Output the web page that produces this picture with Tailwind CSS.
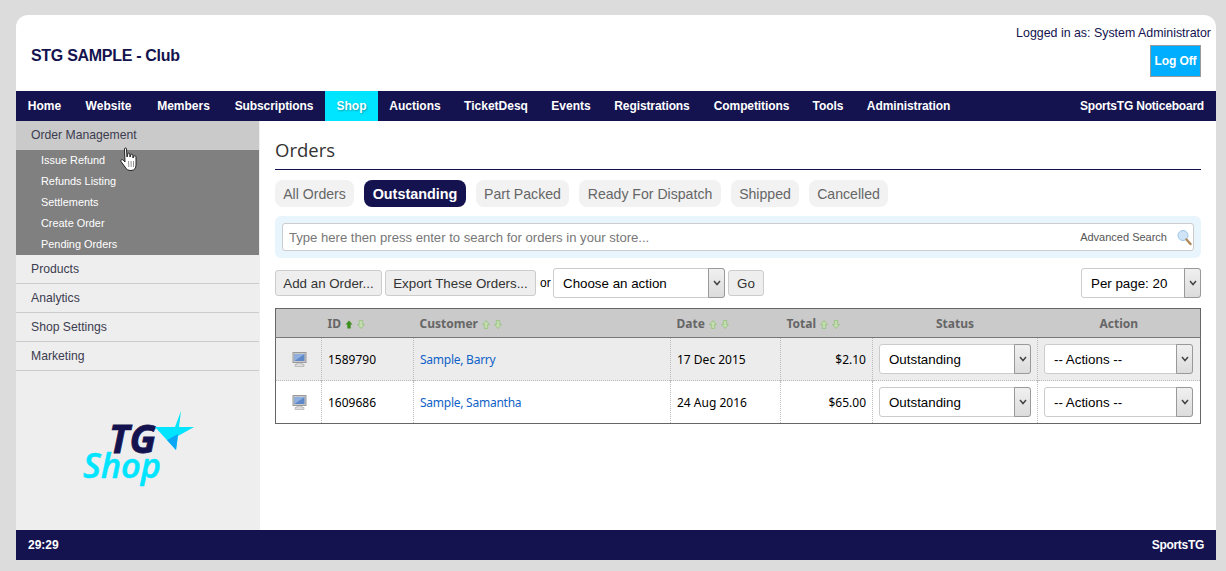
<!DOCTYPE html>
<html lang="en">
<head>
  <meta charset="UTF-8">
  <title>Orders</title>
  <script src="https://cdn.jsdelivr.net/npm/@tailwindcss/browser@4"></script>
</head>
<body class="bg-[#dcdcdc] font-['Liberation_Sans',sans-serif] h-[571px] overflow-hidden">
  <div class="relative w-[1200px] ml-4 pt-[15px]">
    <!-- header -->
    <header class="bg-white rounded-t-xl h-[76px] flex justify-between pl-[15px] pr-[5px]">
      <h1 class="text-[16px] tracking-[-0.3px] font-bold text-[#14134f] mt-[31px] leading-[20px]">STG SAMPLE - Club</h1>
      <div class="flex flex-col items-end">
        <p class="text-[12.4px] text-[#14134f] leading-[16px] mt-[10px]">Logged in as: System Administrator</p>
        <button class="mt-1 mr-[10px] w-[51px] h-[32px] bg-[#00aeff] border border-[#999] text-white text-[12px] tracking-[-0.1px] font-bold">Log Off</button>
      </div>
    </header>

    <!-- nav -->
    <nav class="bg-[#14134f] h-[30px] flex justify-between text-white text-[12px] font-bold leading-[30px]">
      <ul class="flex text-center">
        <li class="w-[57px]">Home</li>
        <li class="w-[71px]">Website</li>
        <li class="w-[79px]">Members</li>
        <li class="w-[102px] tracking-[-0.1px]">Subscriptions</li>
        <li class="w-[53px] bg-[#00e5ff] [text-shadow:1px_1px_2px_rgba(0,0,0,0.3)]">Shop</li>
        <li class="w-[74px]">Auctions</li>
        <li class="w-[88px]">TicketDesq</li>
        <li class="w-[62px]">Events</li>
        <li class="w-[100px] tracking-[-0.1px]">Registrations</li>
        <li class="w-[99px] tracking-[-0.1px]">Competitions</li>
        <li class="w-[54px]">Tools</li>
        <li class="w-[107px] tracking-[-0.1px]">Administration</li>
      </ul>
      <span class="pr-3 tracking-[-0.2px]">SportsTG Noticeboard</span>
    </nav>

    <div class="flex h-[409px] bg-white">
      <!-- sidebar -->
      <aside class="w-[244px] shrink-0 bg-[#eeeeee] relative">
        <div class="w-[243px] text-[12.2px] text-[#3c3c50]">
          <div class="h-[29px] bg-[#cacaca] pl-[15px] leading-[28px]">Order Management</div>
          <ul class="h-[105px] bg-[#808080] text-white text-[10.9px] pl-[25px]">
            <li class="h-[21px] leading-[21px]">Issue Refund</li>
            <li class="h-[21px] leading-[21px]">Refunds Listing</li>
            <li class="h-[21px] leading-[21px]">Settlements</li>
            <li class="h-[21px] leading-[21px]">Create Order</li>
            <li class="h-[21px] leading-[21px]">Pending Orders</li>
          </ul>
          <div class="h-[29px] pl-[15px] leading-[28px] border-b border-[#cccccc]">Products</div>
          <div class="h-[29px] pl-[15px] leading-[28px] border-b border-[#cccccc]">Analytics</div>
          <div class="h-[29px] pl-[15px] leading-[28px] border-b border-[#cccccc]">Shop Settings</div>
          <div class="h-[29px] pl-[15px] leading-[28px] border-b border-[#cccccc]">Marketing</div>
        </div>
        <!-- TG Shop logo -->
        <svg class="ml-[60px] mt-[36px]" width="125" height="80" viewBox="0 0 125 80">
          <text x="33" y="46" font-family="Open Sans" font-style="italic" font-weight="700" font-size="39" fill="#14134f" stroke="#14134f" stroke-width="0.8" textLength="47" lengthAdjust="spacingAndGlyphs">TG</text>
          <text x="7" y="71" font-family="Open Sans" font-style="italic" font-weight="600" font-size="34" fill="#00e5ff" stroke="#00e5ff" stroke-width="0.5" textLength="78" lengthAdjust="spacingAndGlyphs">Shop</text>
          <path d="M79 20 L99 20 L105 4 L103 20 L118 20 L102 29 L100 43 Z" fill="#00e5ff"/>
          <path d="M91 33 L102 27 L100 43 Z" fill="#0aa5f5"/>
        </svg>
        <!-- mouse pointer -->
        <svg class="absolute left-[104px] top-[26px]" width="18" height="25" viewBox="0 0 18 25">
          <path d="M4.5 2 C4.5 0.6 6.5 0.6 6.5 2 L7 10 L8 6.5 C8.5 5.5 9.8 6 9.8 7 L10 10 L11 7.5 C11.5 6.8 12.8 7.2 12.8 8.2 L13 11 L14 9 C14.6 8.4 16 8.8 16 10 L16 18 C16 21 14.5 23.5 11 23.5 C8 23.5 6.5 22.5 5 20 L1 14.5 C0.3 13.2 2 12 3.2 13 L5 15 Z" fill="#fff" stroke="#222" stroke-width="1"/>
          <path d="M8.5 14 L8.8 20 M11 14 L11.2 20 M13.5 14 L13.5 20" stroke="#777" stroke-width="0.8"/>
        </svg>
      </aside>

      <!-- main -->
      <main class="flex-1 pl-[15px] pr-[16px]">
        <h2 class="font-['Open_Sans',sans-serif] text-[18.5px] text-[#333] leading-[20px] pt-[19px] h-[49px] border-b border-[#14134f]">Orders</h2>

        <div class="flex h-[27px] gap-[10px] mt-[10px] text-[14.1px] text-[#666] leading-[29px] text-center">
          <a class="w-[79px] rounded-lg bg-[#f2f2f2]">All Orders</a>
          <a class="w-[102px] rounded-lg bg-[#14134f] text-white font-bold text-[14.4px]">Outstanding</a>
          <a class="w-[93px] rounded-lg bg-[#f2f2f2]">Part Packed</a>
          <a class="w-[142px] rounded-lg bg-[#f2f2f2]">Ready For Dispatch</a>
          <a class="w-[68px] rounded-lg bg-[#f2f2f2]">Shipped</a>
          <a class="w-[79px] rounded-lg bg-[#f2f2f2]">Cancelled</a>
        </div>

        <div class="mt-[9px] h-[42px] bg-[#e9f5fd] rounded-md px-[7px] py-[7px]">
          <div class="h-[28px] bg-white border border-[#ccc] rounded-[3px] flex items-center pl-[6px] pr-[1px]">
            <span class="pt-px text-[13.1px] text-[#777] flex-1">Type here then press enter to search for orders in your store...</span>
            <span class="pt-px text-[11px] text-[#555] mr-[10px]">Advanced Search</span>
            <svg width="15" height="17" viewBox="0 0 15 17">
              <circle cx="6" cy="6.5" r="5" fill="#cfe4f7" stroke="#9fc3e6"/>
              <path d="M9.5 10.5 L13.5 15" stroke="#b08a5a" stroke-width="2.4" stroke-linecap="round"/>
            </svg>
          </div>
        </div>

        <div class="flex items-center mt-[10px] h-[30px] text-[13.33px] text-[#333]">
          <button class="pt-px w-[107px] h-[26px] bg-[#eeeeee] border border-[#ccc] rounded-[3px]">Add an Order...</button>
          <button class="pt-px ml-[3px] w-[151px] h-[26px] bg-[#eeeeee] border border-[#ccc] rounded-[3px]">Export These Orders...</button>
          <span class="ml-[4px] w-[13px] text-[12px] text-black">or</span>
          <div class="w-[172px] h-[30px] bg-white border border-[#ccc] rounded-[3px] flex items-center text-black">
            <span class="pt-px flex-1 pl-[9px]">Choose an action</span>
            <span class="w-[17px] h-[30px] -mr-px bg-gradient-to-b from-[#f0f0f0] to-[#dcdcdc] border border-[#999] rounded-r-[3px] flex items-center justify-center">
              <svg width="8" height="6" viewBox="0 0 8 6"><path d="M1 1 L4 4.5 L7 1" fill="none" stroke="#444" stroke-width="1.5"/></svg>
            </span>
          </div>
          <button class="pt-px ml-[3px] w-[36px] h-[26px] bg-[#eeeeee] border border-[#ccc] rounded-[3px]">Go</button>
          <div class="ml-auto w-[120px] h-[30px] bg-white border border-[#ccc] rounded-[3px] flex items-center text-black">
            <span class="pt-px flex-1 pl-[9px]">Per page: 20</span>
            <span class="w-[17px] h-[30px] -mr-px bg-gradient-to-b from-[#f0f0f0] to-[#dcdcdc] border border-[#999] rounded-r-[3px] flex items-center justify-center">
              <svg width="8" height="6" viewBox="0 0 8 6"><path d="M1 1 L4 4.5 L7 1" fill="none" stroke="#444" stroke-width="1.5"/></svg>
            </span>
          </div>
        </div>

        <!-- orders table -->
        <table class="mt-[10px] w-[925px] table-fixed border-collapse border border-[#666] font-['Noto_Sans',sans-serif] text-[12px] text-black">
          <colgroup>
            <col class="w-[46px]"><col class="w-[92px]"><col class="w-[257px]"><col class="w-[110px]"><col class="w-[92px]"><col class="w-[165px]"><col class="w-[163px]">
          </colgroup>
          <thead>
            <tr class="h-[29px] bg-[#cacaca] border-b border-[#777] text-[#666] font-bold text-left">
              <th></th>
              <th class="pl-[6px] pt-[2px]"><span class="inline-flex items-center gap-1">ID
                <svg width="20" height="9" viewBox="0 0 20 9"><path d="M4 0.5 L7.5 4.5 H5.7 V8.5 H2.3 V4.5 H0.5 Z" fill="#3f8f1f"/><path d="M16 8.5 L12.5 4.5 H14.3 V0.5 H17.7 V4.5 H19.5 Z" fill="#c2dcae" stroke="#8fbf75" stroke-width="0.7"/></svg></span></th>
              <th class="pl-[6px] pt-[2px]"><span class="inline-flex items-center gap-1">Customer
                <svg width="20" height="9" viewBox="0 0 20 9"><path d="M4 0.5 L7.5 4.5 H5.7 V8.5 H2.3 V4.5 H0.5 Z" fill="#c2dcae" stroke="#8fbf75" stroke-width="0.7"/><path d="M16 8.5 L12.5 4.5 H14.3 V0.5 H17.7 V4.5 H19.5 Z" fill="#c2dcae" stroke="#8fbf75" stroke-width="0.7"/></svg></span></th>
              <th class="pl-[6px] pt-[2px]"><span class="inline-flex items-center gap-1">Date
                <svg width="20" height="9" viewBox="0 0 20 9"><path d="M4 0.5 L7.5 4.5 H5.7 V8.5 H2.3 V4.5 H0.5 Z" fill="#c2dcae" stroke="#8fbf75" stroke-width="0.7"/><path d="M16 8.5 L12.5 4.5 H14.3 V0.5 H17.7 V4.5 H19.5 Z" fill="#c2dcae" stroke="#8fbf75" stroke-width="0.7"/></svg></span></th>
              <th class="pl-[6px] pt-[2px]"><span class="inline-flex items-center gap-1">Total
                <svg width="20" height="9" viewBox="0 0 20 9"><path d="M4 0.5 L7.5 4.5 H5.7 V8.5 H2.3 V4.5 H0.5 Z" fill="#c2dcae" stroke="#8fbf75" stroke-width="0.7"/><path d="M16 8.5 L12.5 4.5 H14.3 V0.5 H17.7 V4.5 H19.5 Z" fill="#c2dcae" stroke="#8fbf75" stroke-width="0.7"/></svg></span></th>
              <th class="text-center pt-[2px]">Status</th>
              <th class="text-center pt-[2px]">Action</th>
            </tr>
          </thead>
          <tbody>
            <tr class="h-[43px] bg-[#ececec] border-b border-dotted border-[#bbb]">
              <td class="pl-4 border-r border-dotted border-[#bbb]">
                <svg class="block" width="15" height="15" viewBox="0 0 15 15"><rect x="1" y="0.5" width="13" height="10" fill="#c8c8c8" stroke="#999"/><rect x="2.5" y="2" width="10" height="7" fill="#5e88c8"/><path d="M2.5 2 H12.5 L2.5 9 Z" fill="#8fb0de"/><path d="M5 11 H10 V12.5 H12 V14.5 H3 V12.5 H5 Z" fill="#ddd" stroke="#999" stroke-width="0.5"/></svg>
              </td>
              <td class="pl-[6px] pt-[2px] border-r border-dotted border-[#bbb]">1589790</td>
              <td class="pl-[6px] pt-[2px] border-r border-dotted border-[#bbb] text-[#0f62c8] tracking-[-0.25px]">Sample, Barry</td>
              <td class="pl-[6px] pt-[2px] border-r border-dotted border-[#bbb]">17 Dec 2015</td>
              <td class="pr-[6px] pt-[2px] text-right border-r border-dotted border-[#bbb]">$2.10</td>
              <td class="pl-[6px] border-r border-dotted border-[#bbb]">
                <div class="w-[152px] h-[30px] bg-white border border-[#ccc] rounded-[3px] flex items-center font-['Liberation_Sans',sans-serif] text-[13.33px]">
                  <span class="pt-px flex-1 pl-[9px]">Outstanding</span>
                  <span class="w-[17px] h-[30px] -mr-px bg-gradient-to-b from-[#f0f0f0] to-[#dcdcdc] border border-[#999] rounded-r-[3px] flex items-center justify-center">
                    <svg width="8" height="6" viewBox="0 0 8 6"><path d="M1 1 L4 4.5 L7 1" fill="none" stroke="#444" stroke-width="1.5"/></svg>
                  </span>
                </div>
              </td>
              <td class="pl-[6px]">
                <div class="w-[149px] h-[30px] bg-white border border-[#ccc] rounded-[3px] flex items-center font-['Liberation_Sans',sans-serif] text-[13.33px]">
                  <span class="pt-px flex-1 pl-[9px]">-- Actions --</span>
                  <span class="w-[17px] h-[30px] -mr-px bg-gradient-to-b from-[#f0f0f0] to-[#dcdcdc] border border-[#999] rounded-r-[3px] flex items-center justify-center">
                    <svg width="8" height="6" viewBox="0 0 8 6"><path d="M1 1 L4 4.5 L7 1" fill="none" stroke="#444" stroke-width="1.5"/></svg>
                  </span>
                </div>
              </td>
            </tr>
            <tr class="h-[43px] bg-white">
              <td class="pl-4 border-r border-dotted border-[#bbb]">
                <svg class="block" width="15" height="15" viewBox="0 0 15 15"><rect x="1" y="0.5" width="13" height="10" fill="#c8c8c8" stroke="#999"/><rect x="2.5" y="2" width="10" height="7" fill="#5e88c8"/><path d="M2.5 2 H12.5 L2.5 9 Z" fill="#8fb0de"/><path d="M5 11 H10 V12.5 H12 V14.5 H3 V12.5 H5 Z" fill="#ddd" stroke="#999" stroke-width="0.5"/></svg>
              </td>
              <td class="pl-[6px] pt-[2px] border-r border-dotted border-[#bbb]">1609686</td>
              <td class="pl-[6px] pt-[2px] border-r border-dotted border-[#bbb] text-[#0f62c8] tracking-[-0.25px]">Sample, Samantha</td>
              <td class="pl-[6px] pt-[2px] border-r border-dotted border-[#bbb]">24 Aug 2016</td>
              <td class="pr-[6px] pt-[2px] text-right border-r border-dotted border-[#bbb]">$65.00</td>
              <td class="pl-[6px] border-r border-dotted border-[#bbb]">
                <div class="w-[152px] h-[30px] bg-white border border-[#ccc] rounded-[3px] flex items-center font-['Liberation_Sans',sans-serif] text-[13.33px]">
                  <span class="pt-px flex-1 pl-[9px]">Outstanding</span>
                  <span class="w-[17px] h-[30px] -mr-px bg-gradient-to-b from-[#f0f0f0] to-[#dcdcdc] border border-[#999] rounded-r-[3px] flex items-center justify-center">
                    <svg width="8" height="6" viewBox="0 0 8 6"><path d="M1 1 L4 4.5 L7 1" fill="none" stroke="#444" stroke-width="1.5"/></svg>
                  </span>
                </div>
              </td>
              <td class="pl-[6px]">
                <div class="w-[149px] h-[30px] bg-white border border-[#ccc] rounded-[3px] flex items-center font-['Liberation_Sans',sans-serif] text-[13.33px]">
                  <span class="pt-px flex-1 pl-[9px]">-- Actions --</span>
                  <span class="w-[17px] h-[30px] -mr-px bg-gradient-to-b from-[#f0f0f0] to-[#dcdcdc] border border-[#999] rounded-r-[3px] flex items-center justify-center">
                    <svg width="8" height="6" viewBox="0 0 8 6"><path d="M1 1 L4 4.5 L7 1" fill="none" stroke="#444" stroke-width="1.5"/></svg>
                  </span>
                </div>
              </td>
            </tr>
          </tbody>
        </table>
      </main>
    </div>

    <!-- footer -->
    <footer class="bg-[#14134f] h-[30px] flex justify-between px-3 text-white text-[12px] font-bold leading-[30px]">
      <span>29:29</span>
      <span class="tracking-[-0.3px]">SportsTG</span>
    </footer>
  </div>
</body>
</html>
